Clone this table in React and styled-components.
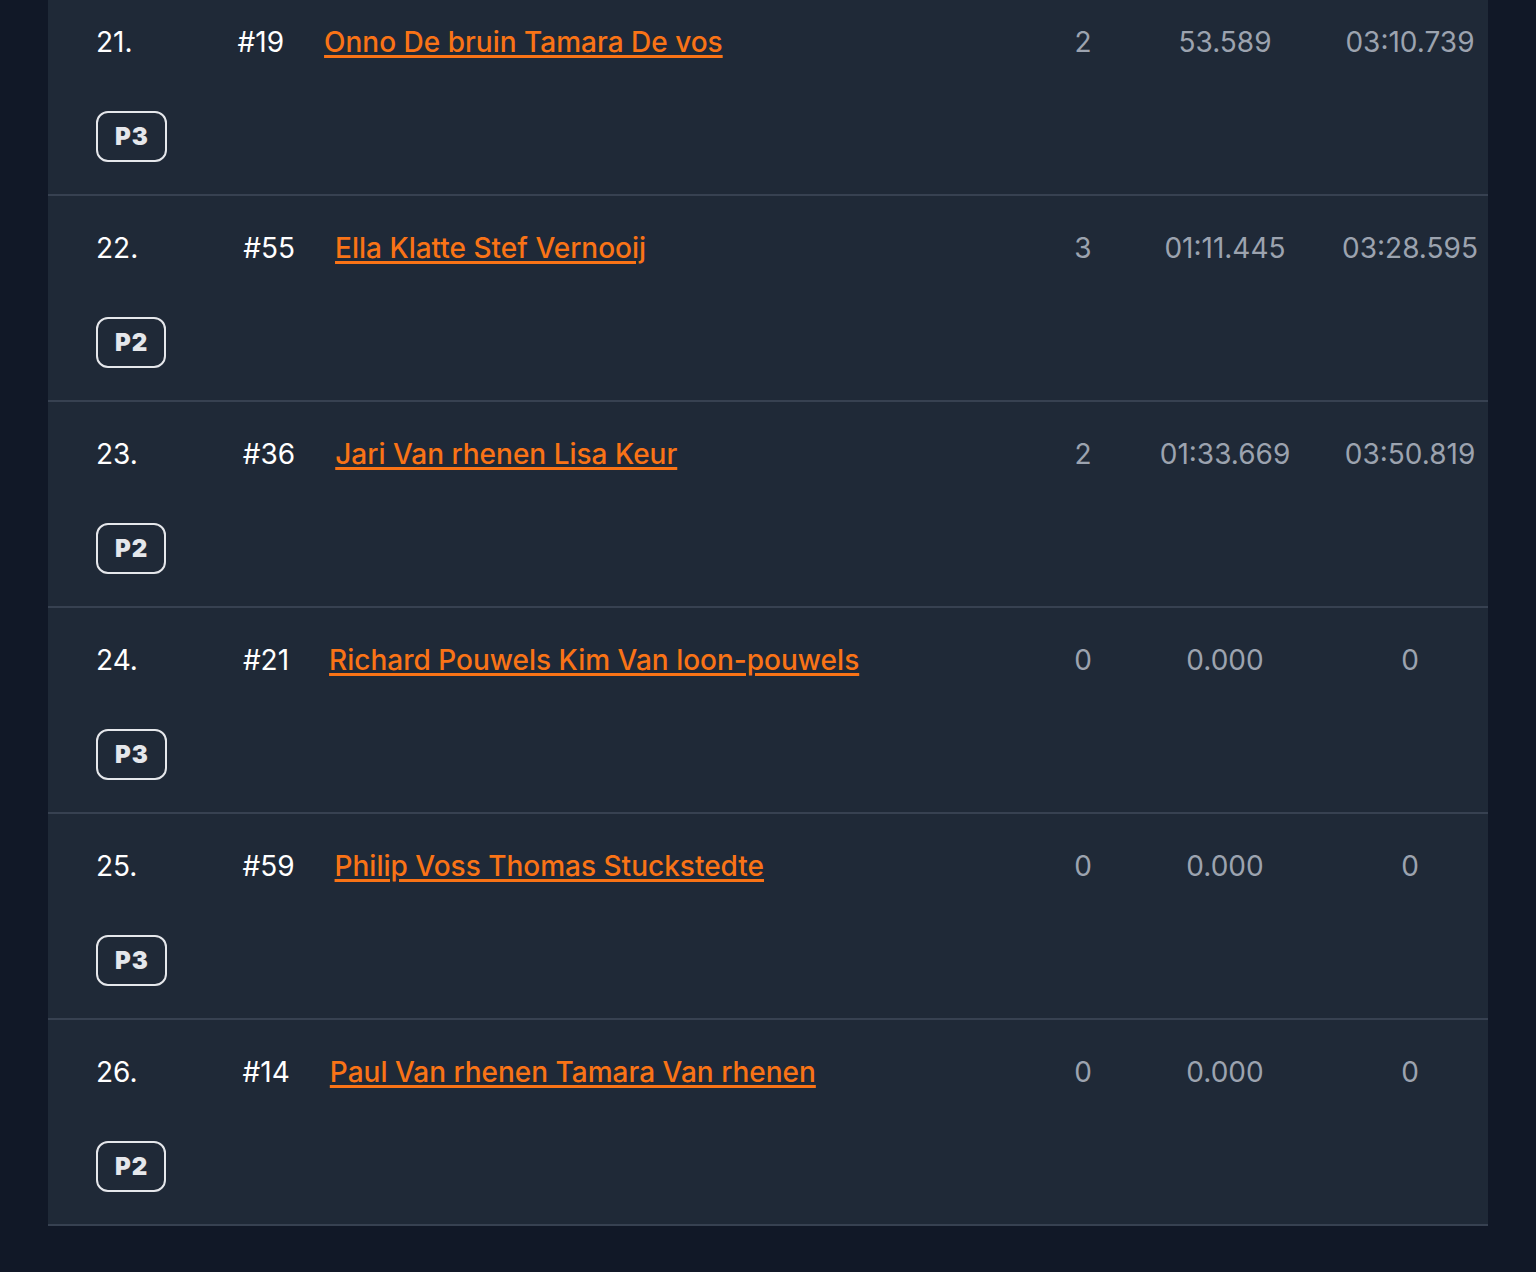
import styled, { createGlobalStyle } from "styled-components";

const GlobalStyle = createGlobalStyle`
  body {
    margin: 0;
    background: #111827;
    font-family: Inter, "Noto Sans", sans-serif;
    overflow: hidden;
  }
`;

const Page = styled.div`
  padding: 0 48px;
  min-height: 1272px;
`;

const Panel = styled.div`
  margin-top: -10px;
  background: #1f2937;
`;

const Row = styled.div`
  padding: 31px 3px 32px 48px;
  border-bottom: 2px solid #374151;
  display: flex;
  flex-direction: column;
  gap: 48px;
`;

const Line = styled.div`
  display: flex;
  align-items: center;
  height: 42px;
  font-size: 28px;
  line-height: 42px;
`;

const Pos = styled.span`
  color: #ffffff;
  margin-right: 105px;
`;

const Num = styled.span`
  color: #ffffff;
  margin-right: 40px;
`;

const Names = styled.a`
  color: #f97316;
  font-weight: 500;
  text-decoration: underline;
  text-decoration-thickness: 3px;
  text-underline-offset: 3px;
  flex: 1;
  cursor: pointer;
`;

const Stat = styled.span`
  color: #9ca3af;
  text-align: center;
  width: ${(p) => p.$w}px;
  margin-left: ${(p) => p.$ml}px;
`;

const Badge = styled.span`
  align-self: flex-start;
  box-sizing: border-box;
  height: 51px;
  padding: 0 16px 0 17px;
  border: 2px solid #e5e7eb;
  border-radius: 12px;
  color: #e5e7eb;
  font-weight: 900;
  font-size: 24px;
  letter-spacing: 1px;
  display: flex;
  align-items: center;
`;

const rows = [
  { pos: 21, num: 19, names: "Onno De bruin Tamara De vos", laps: 2, gap: "53.589", time: "03:10.739", cls: "P3" },
  { pos: 22, num: 55, names: "Ella Klatte Stef Vernooij", laps: 3, gap: "01:11.445", time: "03:28.595", cls: "P2" },
  { pos: 23, num: 36, names: "Jari Van rhenen Lisa Keur", laps: 2, gap: "01:33.669", time: "03:50.819", cls: "P2" },
  { pos: 24, num: 21, names: "Richard Pouwels Kim Van loon-pouwels", laps: 0, gap: "0.000", time: "0", cls: "P3" },
  { pos: 25, num: 59, names: "Philip Voss Thomas Stuckstedte", laps: 0, gap: "0.000", time: "0", cls: "P3" },
  { pos: 26, num: 14, names: "Paul Van rhenen Tamara Van rhenen", laps: 0, gap: "0.000", time: "0", cls: "P2" },
];

export default function App() {
  return (
    <Page>
      <GlobalStyle />
      <Panel>
        {rows.map((r) => (
          <Row key={r.pos}>
            <Line>
              <Pos>{r.pos}.</Pos>
              <Num>#{r.num}</Num>
              <Names>{r.names}</Names>
              <Stat $w={60} $ml={0}>{r.laps}</Stat>
              <Stat $w={150} $ml={37}>{r.gap}</Stat>
              <Stat $w={150} $ml={35}>{r.time}</Stat>
            </Line>
            <Badge>{r.cls}</Badge>
          </Row>
        ))}
      </Panel>
    </Page>
  );
}
